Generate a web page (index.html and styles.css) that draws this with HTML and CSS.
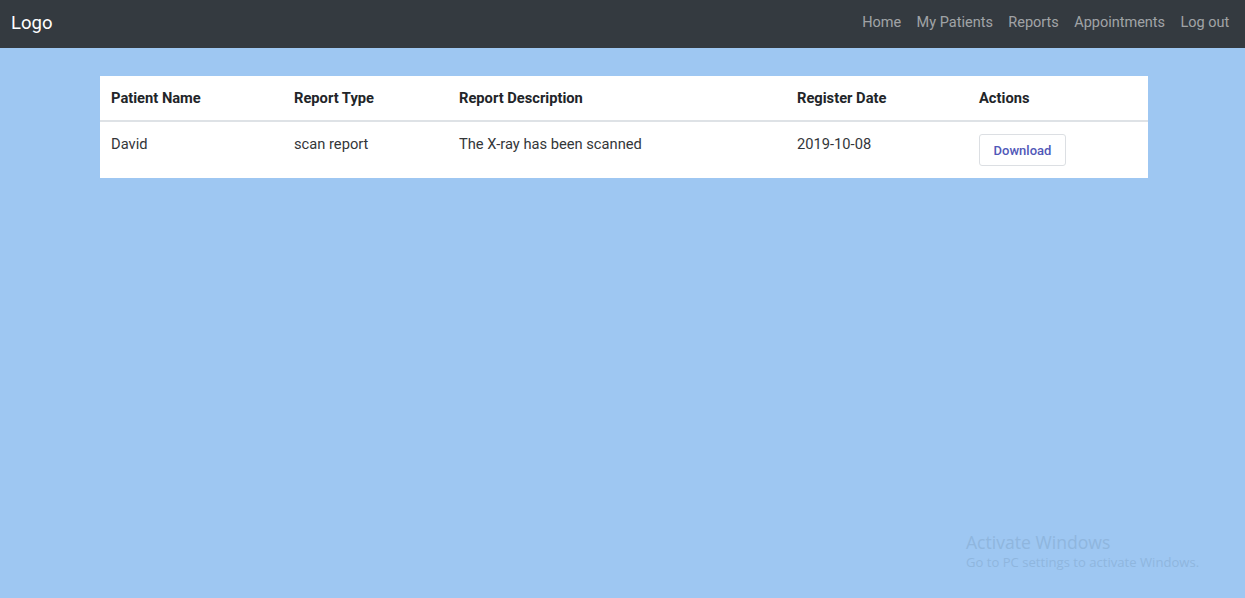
FILE: index.html
```html
<!DOCTYPE html>
<html>
<head>
<meta charset="utf-8">
<link rel="stylesheet" href="styles.css">
</head>
<body>
<nav class="navbar">
  <a class="brand">Logo</a>
  <ul class="nav-links">
    <li><a>Home</a></li>
    <li><a>My Patients</a></li>
    <li><a>Reports</a></li>
    <li><a>Appointments</a></li>
    <li><a>Log out</a></li>
  </ul>
</nav>
<main class="content">
  <table class="report-table">
    <thead>
      <tr>
        <th class="c1">Patient Name</th>
        <th class="c2">Report Type</th>
        <th class="c3">Report Description</th>
        <th class="c4">Register Date</th>
        <th class="c5">Actions</th>
      </tr>
    </thead>
    <tbody>
      <tr>
        <td>David</td>
        <td>scan report</td>
        <td>The X-ray has been scanned</td>
        <td>2019-10-08</td>
        <td><button class="btn">Download</button></td>
      </tr>
    </tbody>
  </table>
</main>
<div class="watermark">
  <div class="wm-title">Activate Windows</div>
  <div class="wm-sub">Go to PC settings to activate Windows.</div>
</div>
</body>
</html>
```
FILE: styles.css
```css
html, body {
  margin: 0;
  padding: 0;
}
body {
  background: #9ec7f2;
  font-family: Roboto, "Liberation Sans", sans-serif;
  width: 1245px;
  height: 598px;
  overflow: hidden;
  position: relative;
}
.navbar {
  height: 48px;
  background: #343a40;
  display: flex;
  align-items: center;
  justify-content: space-between;
  padding: 0 8px 0 11px;
  box-sizing: border-box;
}
.brand {
  color: #ffffff;
  font-size: 18.5px;
  line-height: 24px;
  padding-bottom: 3px;
}
.nav-links {
  list-style: none;
  margin: 0;
  padding: 0;
  display: flex;
  padding-bottom: 3px;
}
.nav-links a {
  display: block;
  color: rgba(255,255,255,0.55);
  font-size: 14.5px;
  line-height: 20px;
  padding: 0 7.7px;
}
.content {
  padding: 28px 97px 0 100px;
}
.report-table {
  width: 1048px;
  border-collapse: collapse;
  background: #ffffff;
  color: #222529;
  font-size: 14.7px;
}
.report-table th {
  text-align: left;
  font-weight: 700;
  height: 45px;
  padding: 0 11px;
  border-bottom: 2px solid #dee2e6;
  box-sizing: border-box;
  vertical-align: middle;
}
.report-table td {
  height: 57px;
  padding: 14px 11px 0;
  vertical-align: top;
  box-sizing: border-box;
  line-height: 17px;
  color: #333639;
}
.c1 { width: 183px; }
.c2 { width: 165px; }
.c3 { width: 338px; }
.c4 { width: 182px; }
.c5 { width: 180px; }
.report-table td .btn {
  margin-top: -2px;
}
.btn {
  font-family: Roboto, "Liberation Sans", sans-serif;
  font-size: 13px;
  font-weight: 500;
  color: #5158b8;
  background: #ffffff;
  border: 1px solid #dcdfe3;
  border-radius: 3px;
  width: 87px;
  height: 32px;
  padding: 0;
  cursor: pointer;
}
.watermark {
  position: absolute;
  left: 966px;
  top: 531px;
  color: #8fb6de;
  font-family: "Open Sans", "Liberation Sans", sans-serif;
}
.wm-title {
  font-size: 17.6px;
  line-height: 22px;
}
.wm-sub {
  font-size: 13.1px;
  line-height: 18px;
}
```
